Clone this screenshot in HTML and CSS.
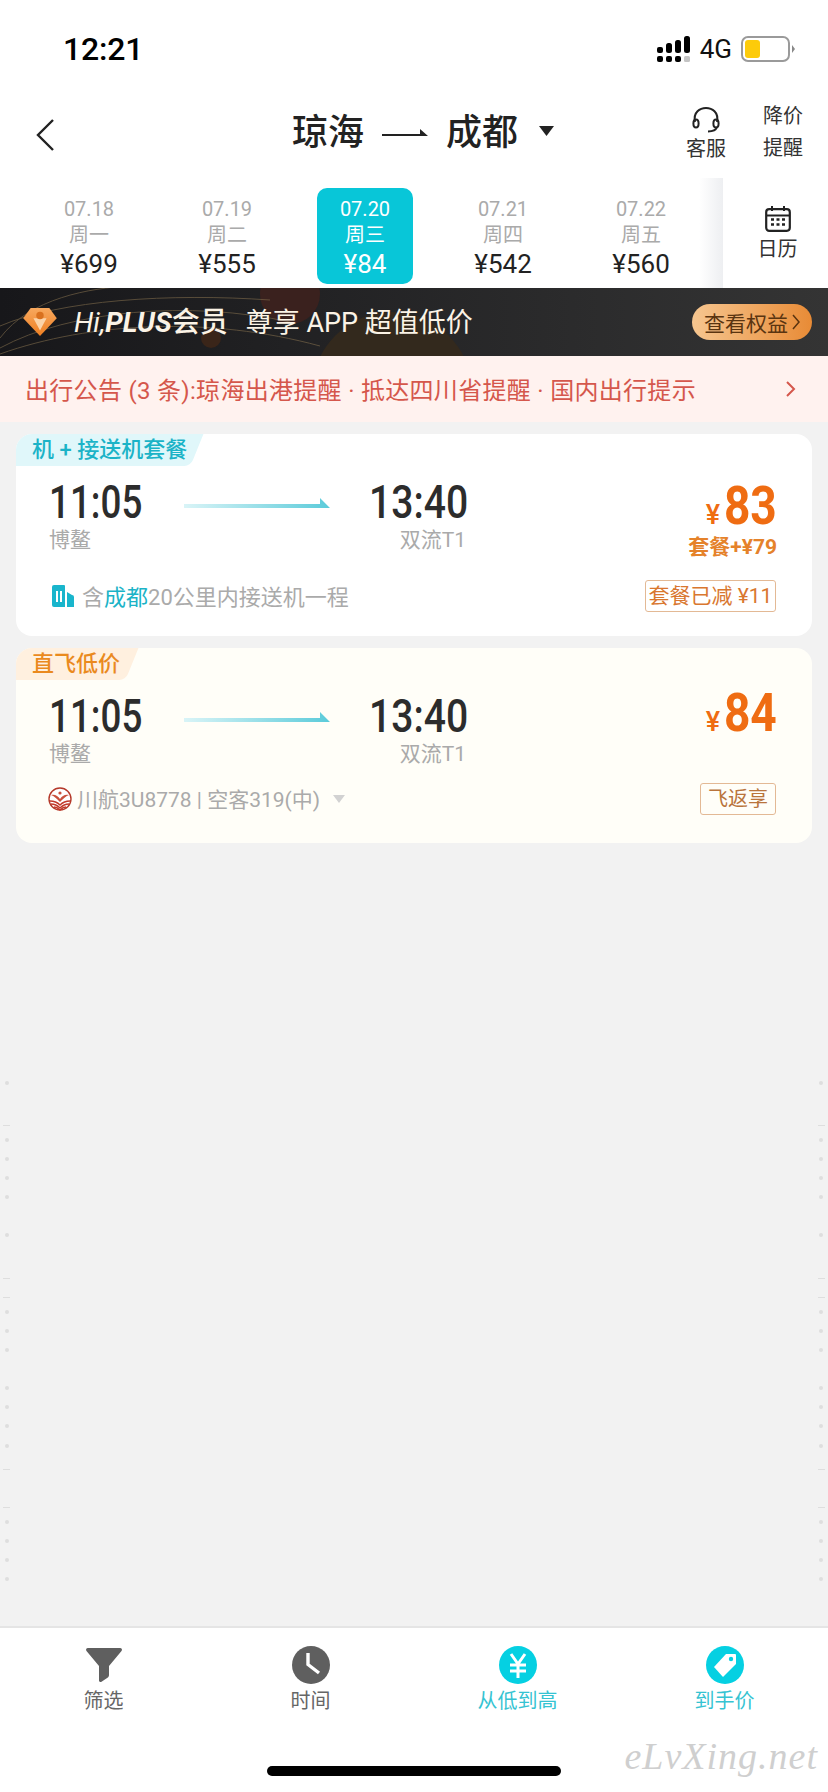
FILE: index.html
```html
<!DOCTYPE html>
<html lang="zh">
<head>
<meta charset="utf-8">
<title>琼海 成都</title>
<link rel="stylesheet" href="styles.css">
</head>
<body>
<div class="page">
  <div class="status">
    <span class="clock">12:21</span>
    <div class="status-right">
      <svg class="signal" width="34" height="26" viewBox="0 0 34 26"><g fill="#000"><rect x="0" y="11" width="6" height="6" rx="2"/><rect x="9" y="7" width="6" height="10" rx="2.5"/><rect x="18" y="4" width="6" height="13" rx="2.5"/><rect x="27" y="0" width="6" height="17" rx="2.5"/><rect x="0" y="20" width="6" height="6" rx="2"/><rect x="9" y="20" width="6" height="6" rx="2"/><rect x="18" y="20" width="6" height="6" rx="2"/></g><rect x="27" y="20" width="6" height="6" rx="1.5" fill="#c4c4c4"/></svg>
      <span class="net">4G</span>
      <svg class="battery" width="55" height="26" viewBox="0 0 55 26"><rect x="1" y="1" width="47" height="24" rx="6" fill="#fff" stroke="#9a9a9a" stroke-width="2"/><rect x="4" y="4" width="15" height="18" rx="3" fill="#fdcb0a"/><path d="M51 9l3 4-3 4z" fill="#888"/></svg>
    </div>
  </div>

  <header class="nav">
    <svg class="back" width="18" height="32" viewBox="0 0 18 32"><path d="M17 1L2 16l15 15" fill="none" stroke="#222" stroke-width="2.4"/></svg>
    <div class="route">
      <span>琼海</span>
      <svg class="route-arrow" width="46" height="12" viewBox="0 0 46 12"><path d="M0 9h46L38 2v5H0z" fill="#222"/></svg>
      <span>成都</span>
      <svg class="route-caret" width="15" height="10" viewBox="0 0 15 10"><path d="M0 0h15L7.500 10z" fill="#222"/></svg>
    </div>
    <div class="service">
      <svg width="28" height="26" viewBox="0 0 28 26"><path d="M3 15C1 5 8 1 14 1s13 4 11 14M25 20c-1 3-5 4.500-9 4.500" fill="none" stroke="#222" stroke-width="2"/><ellipse cx="4" cy="16.500" rx="2.600" ry="4" fill="none" stroke="#222" stroke-width="2"/><ellipse cx="24" cy="16.500" rx="2.600" ry="4" fill="none" stroke="#222" stroke-width="2"/></svg>
      <span>客服</span>
    </div>
    <div class="alert-price">降价<br>提醒</div>
  </header>

  <section class="dates">
    <div class="date-list">
      <div class="date"><span>07.18</span><span>周一</span><b>¥699</b></div>
      <div class="date"><span>07.19</span><span>周二</span><b>¥555</b></div>
      <div class="date active"><span>07.20</span><span>周三</span><b>¥84</b></div>
      <div class="date"><span>07.21</span><span>周四</span><b>¥542</b></div>
      <div class="date"><span>07.22</span><span>周五</span><b>¥560</b></div>
    </div>
    <div class="calendar">
      <svg width="26" height="26" viewBox="0 0 26 26"><rect x="1.200" y="3.200" width="23.600" height="21.600" rx="3" fill="none" stroke="#222" stroke-width="2.200"/><path d="M1.500 9.500h23" stroke="#222" stroke-width="2"/><path d="M7 0v5M19 0v5" stroke="#222" stroke-width="2"/><path d="M6 13.500h3M11.500 13.500h3M17 13.500h3M6 18.500h3M11.500 18.500h3M17 18.500h3" stroke="#222" stroke-width="2.400"/></svg>
      <span>日历</span>
    </div>
  </section>

  <section class="plus">
    <svg class="plus-bg" width="828" height="68" viewBox="0 0 828 68" preserveAspectRatio="none">
      <defs><linearGradient id="bgG" x1="0" x2="1"><stop offset="0" stop-color="#17171a"/><stop offset="1" stop-color="#343434"/></linearGradient></defs>
      <rect width="828" height="68" fill="url(#bgG)"/>
      <circle cx="392" cy="104" r="80" fill="#33291d"/>
      <circle cx="290" cy="6" r="30" fill="#3a211e"/>
      <circle cx="211" cy="50" r="10" fill="#3a2519"/>
      <g fill="none" stroke="#8a7450" stroke-width="1" opacity=".55"><path d="M0 50C30 10 90 0 130 -2"/><path d="M0 38C60 12 170 5 270 12"/><path d="M0 60C70 22 190 12 290 34"/><path d="M0 66C90 34 210 28 320 58"/></g>
    </svg>
    <svg class="diamond" width="34" height="28" viewBox="0 0 36 30"><defs><linearGradient id="dm" x1="0" x2="0" y1="0" y2="1"><stop offset="0" stop-color="#f7a85e"/><stop offset="1" stop-color="#ee7f22"/></linearGradient></defs><path d="M8 0h20l8 11-18 19L0 11z" fill="url(#dm)"/><path d="M11 11h14l-7 13z" fill="#fbd3a8"/><circle cx="18" cy="8" r="4" fill="#d9711f"/></svg>
    <span class="plus-hi"><i class="hi">Hi,</i><i class="pl">PLUS</i>会员</span>
    <span class="plus-text">尊享 APP 超值低价</span>
    <span class="plus-btn">查看权益<svg width="8" height="16" viewBox="0 0 8 16"><path d="M1 1l6 7-6 7" fill="none" stroke="#5a3410" stroke-width="1.500"/></svg></span>
  </section>

  <section class="notice">
    <span>出行公告 (3 条):琼海出港提醒 · 抵达四川省提醒 · 国内出行提示</span>
    <svg width="10" height="16" viewBox="0 0 10 16"><path d="M1 1l7 7-7 7" fill="none" stroke="#d5574c" stroke-width="2"/></svg>
  </section>

  <main class="list">
    <article class="card">
      <div class="tag tag-blue">机 + 接送机套餐</div>
      <div class="flight">
        <div class="leg"><b class="time time-a">11:05</b><span class="port">博鳌</span></div>
        <svg class="arrow" width="146" height="12" viewBox="0 0 146 12"><defs><linearGradient id="ar1" x1="0" x2="1"><stop offset="0" stop-color="#d9f4f7"/><stop offset="1" stop-color="#5bcbda"/></linearGradient></defs><path d="M0 6h136V0l10 10H0z" fill="url(#ar1)"/></svg>
        <div class="leg leg-end"><b class="time">13:40</b><span class="port">双流T1</span></div>
        <div class="price">
          <div class="amount"><em>¥</em><b>83</b></div>
          <div class="bundle">套餐+¥79</div>
        </div>
      </div>
      <div class="extra">
        <svg width="22" height="22" viewBox="0 0 22 22"><path d="M2 0h10a1 1 0 0 1 1 1v21H2a2 2 0 0 1-2-2V2a2 2 0 0 1 2-2z" fill="#19b5cc"/><path d="M15 7l5 3a2 2 0 0 1 2 2v10h-7z" fill="#19b5cc"/><path d="M5 6v11M9 6v11" stroke="#fff" stroke-width="2"/></svg>
        <span class="extra-text">含<i>成都</i>20公里内接送机一程</span>
        <span class="pill pill-wide">套餐已减 ¥11</span>
      </div>
    </article>

    <article class="card card-warm">
      <div class="tag tag-orange">直飞低价</div>
      <div class="flight">
        <div class="leg"><b class="time time-a">11:05</b><span class="port">博鳌</span></div>
        <svg class="arrow" width="146" height="12" viewBox="0 0 146 12"><defs><linearGradient id="ar2" x1="0" x2="1"><stop offset="0" stop-color="#d9f4f7"/><stop offset="1" stop-color="#5bcbda"/></linearGradient></defs><path d="M0 6h136V0l10 10H0z" fill="url(#ar2)"/></svg>
        <div class="leg leg-end"><b class="time">13:40</b><span class="port">双流T1</span></div>
        <div class="price">
          <div class="amount"><em>¥</em><b>84</b></div>
        </div>
      </div>
      <div class="extra extra-warm">
        <svg width="24" height="24" viewBox="0 0 24 24"><circle cx="12" cy="12" r="11" fill="#fff" stroke="#b5392a" stroke-width="1.400"/><path d="M3 8c4-1 7 1 9 4 2-3 5-5 9-4-3 1-6 4-9 7-3-3-6-6-9-7z" fill="#c9503c"/><circle cx="12" cy="6" r="1.600" fill="#c9503c"/><g fill="none" stroke="#c23a2a" stroke-width="1.400"><path d="M2 14c4 0 7 1 10 4 3-3 6-4 10-4"/><path d="M3 17c3 0 6 1 9 4 3-3 6-4 9-4"/><path d="M6 20c2 0 4 1 6 3 2-2 4-3 6-3"/></g></svg>
        <span class="extra-text">川航3U8778 | 空客319(中)</span>
        <svg class="down" width="12" height="8" viewBox="0 0 12 8"><path d="M0 0h12L6 8z" fill="#d2d2d2"/></svg>
        <span class="pill pill-warm">飞返享</span>
      </div>
    </article>
  </main>

  <svg class="edge edge-left" width="10" height="520" viewBox="0 0 10 520"><g fill="#dedede"><circle cx="7" cy="3" r="2"/><rect x="3" y="45" width="7" height="1"/><circle cx="7" cy="60" r="2"/><circle cx="7" cy="79" r="2"/><circle cx="7" cy="98" r="2"/><circle cx="7" cy="117" r="2"/><circle cx="7" cy="155" r="2"/><rect x="3" y="198" width="7" height="1"/><rect x="3" y="217" width="7" height="1"/><circle cx="7" cy="232" r="2"/><circle cx="7" cy="251" r="2"/><circle cx="7" cy="270" r="2"/><circle cx="7" cy="308" r="2"/><circle cx="7" cy="327" r="2"/><circle cx="7" cy="346" r="2"/><circle cx="7" cy="366" r="2"/><rect x="3" y="389" width="7" height="1"/><rect x="3" y="427" width="7" height="1"/><circle cx="7" cy="442" r="2"/><circle cx="7" cy="461" r="2"/><circle cx="7" cy="480" r="2"/><circle cx="7" cy="499" r="2"/></g></svg>
  <svg class="edge edge-right" width="10" height="520" viewBox="0 0 10 520"><g fill="#dedede"><circle cx="3" cy="3" r="2"/><rect x="0" y="45" width="7" height="1"/><circle cx="3" cy="60" r="2"/><circle cx="3" cy="79" r="2"/><circle cx="3" cy="98" r="2"/><circle cx="3" cy="117" r="2"/><circle cx="3" cy="155" r="2"/><rect x="0" y="198" width="7" height="1"/><rect x="0" y="217" width="7" height="1"/><circle cx="3" cy="232" r="2"/><circle cx="3" cy="251" r="2"/><circle cx="3" cy="270" r="2"/><circle cx="3" cy="308" r="2"/><circle cx="3" cy="327" r="2"/><circle cx="3" cy="346" r="2"/><circle cx="3" cy="366" r="2"/><rect x="0" y="389" width="7" height="1"/><rect x="0" y="427" width="7" height="1"/><circle cx="3" cy="442" r="2"/><circle cx="3" cy="461" r="2"/><circle cx="3" cy="480" r="2"/><circle cx="3" cy="499" r="2"/></g></svg>

  <footer class="toolbar">
    <div class="tabs">
      <div class="tab"><svg width="38" height="38" viewBox="0 0 38 38"><path d="M3 2h32c2 0 2.500 2 1.500 3L24 20v9c0 1-.5 2-1.500 2.800l-6 4c-1 .6-2.500 0-2.500-1.300V20L1.500 5C.5 4 1 2 3 2z" fill="#5f5f5f"/></svg><span>筛选</span></div>
      <div class="tab"><svg width="38" height="38" viewBox="0 0 38 38"><circle cx="19" cy="19" r="19" fill="#5f5f5f"/><path d="M16 7v11.500L27 27" fill="none" stroke="#fff" stroke-width="3.400"/></svg><span>时间</span></div>
      <div class="tab tab-on"><svg width="38" height="38" viewBox="0 0 38 38"><circle cx="19" cy="19" r="19" fill="#05d0e2"/><path d="M12 8l7 10 7-10M11 19h16M11 25h16M19 18v14" fill="none" stroke="#fff" stroke-width="3"/></svg><span>从低到高</span></div>
      <div class="tab tab-on"><svg width="38" height="38" viewBox="0 0 38 38"><circle cx="19" cy="19" r="19" fill="#05d0e2"/><path d="M20 8h9a1 1 0 0 1 1 1v9L17 31l-9-10z" fill="#fff"/><circle cx="25" cy="13" r="2.200" fill="#05d0e2"/></svg><span>到手价</span></div>
    </div>
    <div class="home"></div>
    <span class="mark">eLvXing.net</span>
  </footer>
</div>
</body>
</html>
```

FILE: styles.css
```css
* { box-sizing: border-box; }
html, body { margin: 0; padding: 0; }
body { font-family: "Roboto", "Noto Sans CJK SC", sans-serif; background: #f2f2f2; }
i, em { font-style: normal; }
.page { position: relative; width: 828px; height: 1792px; background: #f2f2f2; overflow: hidden; display: flex; flex-direction: column; }

.status { height: 92px; background: #fff; display: flex; justify-content: space-between; align-items: center; padding: 6px 32px 0 63px; flex: none; }
.clock { font-weight: 500; font-size: 32px; letter-spacing: -.2px; color: #000; }
.status-right { display: flex; align-items: center; gap: 9px; }
.net { font-size: 26px; color: #111; }

.nav { height: 96px; background: #fff; display: flex; align-items: center; position: relative; padding-left: 36px; flex: none; }
.back { margin-bottom: 10px; }
.route { position: absolute; left: 292px; top: 16px; display: flex; align-items: center; font-size: 36px; font-weight: 500; color: #222; line-height: 50px; }
.route-arrow { margin: 0 18px; }
.route-caret { margin-left: 21px; margin-top: -4px; }
.service { position: absolute; left: 680px; top: 15px; width: 52px; display: flex; flex-direction: column; align-items: center; font-size: 20px; color: #333; line-height: 26px; gap: 3px; }
.alert-price { position: absolute; left: 763px; top: 8px; font-size: 20px; color: #333; line-height: 32px; }

.dates { height: 100px; background: #fff; display: flex; flex: none; }
.date-list { width: 723px; display: flex; padding-left: 20px; }
.date { width: 138px; height: 96px; display: flex; flex-direction: column; align-items: center; color: #aaa; font-size: 20px; line-height: 26px; padding-top: 8px; }
.date b { font-weight: 400; font-size: 26px; color: #222; line-height: 33px; }
.date.active { color: #fff; position: relative; }
.date.active b { color: #fff; }
.date.active::before { content: ""; position: absolute; z-index: 0; left: 21px; width: 96px; top: 0; height: 96px; background: #08c6d8; border-radius: 10px; }
.date.active > * { position: relative; }
.calendar { width: 105px; height: 110px; margin-top: -10px; padding: 28px 0 0 4px; display: flex; flex-direction: column; align-items: center; gap: 4px; font-size: 20px; color: #333; line-height: 26px; background: #fff; position: relative; }
.calendar::before { content: ""; position: absolute; left: -24px; top: 0; bottom: 0; width: 24px; background: linear-gradient(90deg, rgba(120,130,150,0), rgba(120,130,150,.13)); }

.plus { height: 68px; position: relative; display: flex; align-items: center; flex: none; color: #fbf3e6; overflow: hidden; }
.plus-bg { position: absolute; left: 0; top: 0; }
.plus > *:not(.plus-bg) { position: relative; }
.diamond { margin-left: 23px; }
.plus-hi { margin: 0 0 4px 17px; font-size: 28px; font-weight: 500; }
.plus-hi i { font-style: italic; }
.plus-hi .hi { font-weight: 400; }
.plus-hi .pl { font-weight: 700; }
.plus-text { margin: 0 0 4px 18px; font-size: 27px; }
.plus-btn { position: absolute !important; right: 16px; top: 16px; width: 120px; height: 36px; border-radius: 18px; background: linear-gradient(90deg, #f6c690, #e88b36); color: #5a3410; font-size: 21px; display: flex; align-items: center; justify-content: center; gap: 4px; padding-bottom: 1px; }

.notice { height: 66px; background: #fff2ef; display: flex; align-items: center; justify-content: space-between; padding: 0 32px 1px 25px; color: #d5574c; font-size: 24px; letter-spacing: .3px; flex: none; }

.list { display: flex; flex-direction: column; gap: 12px; padding: 12px 16px 0; }
.card { background: #fff; border-radius: 16px; height: 202px; position: relative; overflow: hidden; padding: 0 35px 0 33px; }
.card-warm { background: #fffef8; height: 195px; }
.tag { position: absolute; left: 0; top: 0; z-index: 1; height: 32px; font-size: 22px; font-weight: 500; line-height: 32px; padding-left: 16px; white-space: nowrap; }
.tag::before { content: ""; position: absolute; z-index: -1; left: -8px; top: 0; bottom: 0; right: 0; transform: skewX(-22deg); border-bottom-right-radius: 6px; }
.tag-blue { color: #1bb3c7; width: 181px; }
.tag-blue::before { background: #e0f7fa; }
.tag-orange { color: #ea8a1e; width: 116px; }
.tag-orange::before { background: #fff0df; }
.flight { display: flex; align-items: flex-start; padding-top: 45px; position: relative; }
.leg { display: flex; flex-direction: column; align-items: flex-start; width: 100px; }
.leg-end { margin-left: 220px; width: 97px; }
.time { font-size: 46px; font-weight: 500; color: #2c2c2c; line-height: 46px; white-space: nowrap; transform-origin: left center; transform: scaleX(.85); }
.time-a { transform: scaleX(.8); }
.port { font-size: 21px; color: #aaa; line-height: 30px; white-space: nowrap; }
.leg-end .port { align-self: flex-end; }
.arrow { position: absolute; left: 135px; top: 64px; }
.price { margin-left: auto; display: flex; flex-direction: column; align-items: flex-end; color: #ef6c12; }
.amount { display: flex; align-items: baseline; line-height: 52px; margin-top: 1px; }
.card-warm .amount { margin-top: -6px; }
.amount em { font-size: 27px; font-weight: 500; margin-right: 3px; }
.amount b { display: block; font-size: 53px; font-weight: 700; margin-left: -7px; transform-origin: right center; transform: scaleX(.87); }
.bundle { font-size: 21px; font-weight: 700; color: #e5822a; line-height: 28px; margin-top: -8px; white-space: nowrap; }
.extra { position: absolute; left: 36px; right: 36px; top: 146px; height: 32px; display: flex; align-items: center; }
.extra-warm { left: 32px; top: 135px; }
.extra-text { font-size: 22px; color: #aaa; margin: -3px 0 0 8px; white-space: nowrap; }
.extra-warm .extra-text { margin-left: 5px; font-size: 21px; margin-top: -2px; }
.extra-text i { color: #1bb3c7; }
.down { margin-left: 13px; }
.pill { margin-left: auto; height: 32px; width: 76px; border: 1px solid #e3b995; border-radius: 3px; color: #d9772f; font-size: 21px; line-height: 30px; text-align: center; white-space: nowrap; }
.pill-wide { width: 131px; }
.pill-warm { color: #b9743c; font-size: 20px; }

.edge { position: absolute; top: 1080px; }
.edge-left { left: 0; }
.edge-right { right: 0; }

.toolbar { position: absolute; left: 0; right: 0; bottom: 0; height: 166px; background: #fff; border-top: 2px solid #e5e5e5; }
.tabs { display: grid; grid-template-columns: repeat(4, 1fr); padding-top: 18px; }
.tab { display: flex; flex-direction: column; align-items: center; font-size: 20px; color: #666; line-height: 26px; gap: 4px; }
.tab-on { color: #35c3d2; }
.home { position: absolute; left: 267px; bottom: 16px; width: 294px; height: 10px; background: #000; border-radius: 5px; }
.mark { position: absolute; right: 10px; bottom: 14px; font-family: "Liberation Serif", serif; font-style: italic; font-size: 38px; color: #cfcfcf; letter-spacing: 1px; }
```
